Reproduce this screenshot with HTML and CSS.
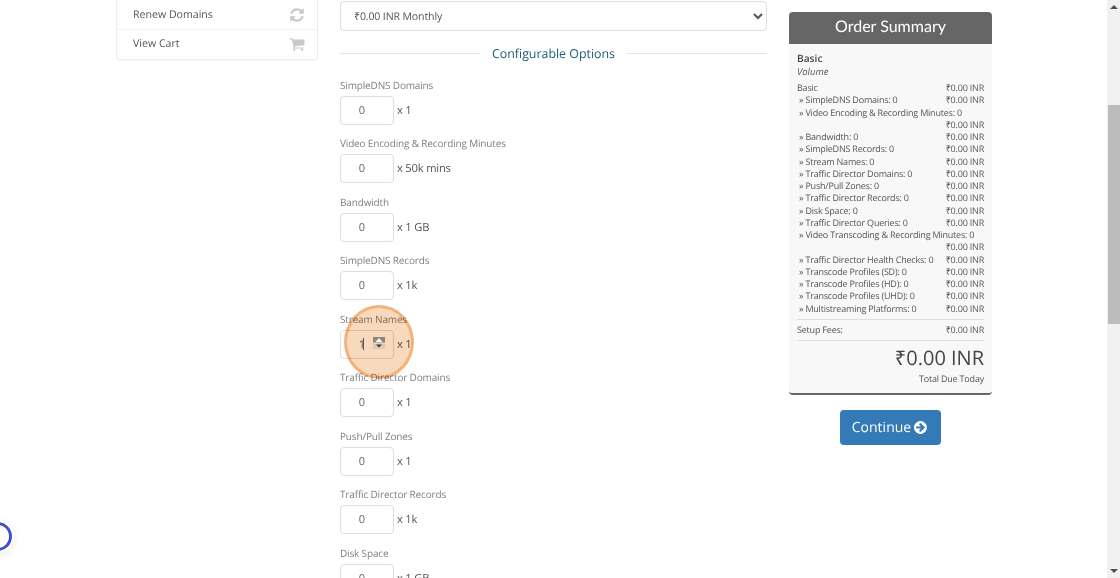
FILE: index.html
```html
<!DOCTYPE html>
<html lang="en">
<head>
    <meta charset="UTF-8">
    <title>Shopping Cart</title>
    <link rel="stylesheet" href="styles.css">
</head>
<body>
    <div class="page">
        <div class="sidebar">
            <a class="side-item">Renew Domains
                <svg class="side-icon" viewBox="0 0 1792 1792"><path d="M1639 1056q0 5-1 7-64 268-268 434.500t-478 166.500q-146 0-282.500-55t-243.500-157l-129 129q-19 19-45 19t-45-19-19-45v-448q0-26 19-45t45-19h448q26 0 45 19t19 45-19 45l-137 137q71 66 161 102t187 36q134 0 250-65t186-179q11-17 53-117 8-23 30-23h192q13 0 22.500 9.500t9.500 22.500zm25-800v448q0 26-19 45t-45 19h-448q-26 0-45-19t-19-45 19-45l138-138q-148-137-349-137-134 0-250 65t-186 179q-11 17-53 117-8 23-30 23h-199q-13 0-22.500-9.500t-9.500-22.500v-7q65-268 270-434.500t480-166.500q146 0 284 55.500t245 156.500l130-129q19-19 45-19t45 19 19 45z"/></svg>
            </a>
            <a class="side-item">View Cart
                <svg class="side-icon" viewBox="0 0 1792 1792"><path d="M704 1536q0 52-38 90t-90 38-90-38-38-90 38-90 90-38 90 38 38 90zm896 0q0 52-38 90t-90 38-90-38-38-90 38-90 90-38 90 38 38 90zm128-1088v512q0 24-16.500 42.500t-40.500 21.500l-1044 122q13 60 13 70 0 16-24 64h920q26 0 45 19t19 45-19 45-45 19h-1024q-26 0-45-19t-19-45q0-11 8-31.500t16-36 21.500-40 15.500-29.500l-177-823h-204q-26 0-45-19t-19-45 19-45 45-19h256q16 0 28.500 6.500t19.500 15.500 13 24.500 8 26 5.500 29.500 4.500 26h1201q26 0 45 19t19 45z"/></svg>
            </a>
        </div>

        <div class="options">
            <select class="cycle"><option>₹0.00 INR Monthly</option></select>
            <div class="sub-heading"><span>Configurable Options</span></div>

            <div class="option">
                <label>SimpleDNS Domains</label>
                <div class="qty"><input type="text" value="0"> x 1</div>
            </div>
            <div class="option">
                <label>Video Encoding &amp; Recording Minutes</label>
                <div class="qty"><input type="text" value="0"> x 50k mins</div>
            </div>
            <div class="option">
                <label>Bandwidth</label>
                <div class="qty"><input type="text" value="0"> x 1 GB</div>
            </div>
            <div class="option">
                <label>SimpleDNS Records</label>
                <div class="qty"><input type="text" value="0"> x 1k</div>
            </div>
            <div class="option">
                <label>Stream Names</label>
                <div class="qty"><input type="text" value="1"> x 1</div>
            </div>
            <div class="option">
                <label>Traffic Director Domains</label>
                <div class="qty"><input type="text" value="0"> x 1</div>
            </div>
            <div class="option">
                <label>Push/Pull Zones</label>
                <div class="qty"><input type="text" value="0"> x 1</div>
            </div>
            <div class="option">
                <label>Traffic Director Records</label>
                <div class="qty"><input type="text" value="0"> x 1k</div>
            </div>
            <div class="option">
                <label>Disk Space</label>
                <div class="qty"><input type="text" value="0"> x 1 GB</div>
            </div>
        </div>

        <div class="summary-col">
            <div class="summary">
                <h2>Order Summary</h2>
                <div class="summary-body">
                    <div class="product-name">Basic</div>
                    <div class="product-group">Volume</div>
                    <div class="line"><span>Basic</span><span>₹0.00 INR</span></div>
                    <div class="line sub"><span>» SimpleDNS Domains: 0</span><span>₹0.00 INR</span></div>
                    <div class="line sub"><span>» Video Encoding &amp; Recording Minutes: 0</span><span>₹0.00 INR</span></div>
                    <div class="line sub"><span>» Bandwidth: 0</span><span>₹0.00 INR</span></div>
                    <div class="line sub"><span>» SimpleDNS Records: 0</span><span>₹0.00 INR</span></div>
                    <div class="line sub"><span>» Stream Names: 0</span><span>₹0.00 INR</span></div>
                    <div class="line sub"><span>» Traffic Director Domains: 0</span><span>₹0.00 INR</span></div>
                    <div class="line sub"><span>» Push/Pull Zones: 0</span><span>₹0.00 INR</span></div>
                    <div class="line sub"><span>» Traffic Director Records: 0</span><span>₹0.00 INR</span></div>
                    <div class="line sub"><span>» Disk Space: 0</span><span>₹0.00 INR</span></div>
                    <div class="line sub"><span>» Traffic Director Queries: 0</span><span>₹0.00 INR</span></div>
                    <div class="line sub"><span>» Video Transcoding &amp; Recording Minutes: 0</span><span>₹0.00 INR</span></div>
                    <div class="line sub"><span>» Traffic Director Health Checks: 0</span><span>₹0.00 INR</span></div>
                    <div class="line sub"><span>» Transcode Profiles (SD): 0</span><span>₹0.00 INR</span></div>
                    <div class="line sub"><span>» Transcode Profiles (HD): 0</span><span>₹0.00 INR</span></div>
                    <div class="line sub"><span>» Transcode Profiles (UHD): 0</span><span>₹0.00 INR</span></div>
                    <div class="line sub"><span>» Multistreaming Platforms: 0</span><span>₹0.00 INR</span></div>
                    <div class="fees line"><span>Setup Fees:</span><span>₹0.00 INR</span></div>
                    <div class="total">₹0.00 INR</div>
                    <div class="total-label">Total Due Today</div>
                </div>
            </div>
            <a class="continue">Continue
                <svg viewBox="0 0 1792 1792"><path d="M1285 896q0-27-18-45l-91-91-362-362q-18-18-45-18t-45 18l-91 91q-18 18-18 45t18 45l189 189h-502q-26 0-45 19t-19 45v128q0 26 19 45t45 19h502l-189 189q-19 19-19 45t19 45l91 91q18 18 45 18t45-18l362-362 91-91q18-18 18-45zm251 0q0 209-103 385.500t-279.500 279.500-385.500 103-385.500-103-279.500-279.500-103-385.500 103-385.500 279.500-279.500 385.500-103 385.500 103 279.500 279.500 103 385.500z"/></svg>
            </a>
        </div>
    </div>

    <!-- click highlight over the Stream Names field -->
    <div class="click-mark">
        <span class="caret"></span>
        <svg class="spinner" viewBox="0 0 12 12"><rect width="12" height="5.500" fill="#8f857b"/><rect y="6.500" width="12" height="5.500" fill="#d9c9b8"/><path d="M6 1 9.500 5h-7z" fill="#fff"/><path d="M3 7.500h6L6 10.500z" fill="#3d3a38"/></svg>
    </div>

    <div class="help-ring"></div>

    <div class="scrollbar">
        <span class="arrow up"></span>
        <span class="thumb"></span>
        <span class="arrow down"></span>
    </div>
</body>
</html>
```

FILE: styles.css
```css
html, body {
    margin: 0;
    height: 578px;
    overflow: hidden;
    background: #fff;
}
body {
    font-family: "Open Sans", sans-serif;
    color: #555;
    position: relative;
    text-rendering: geometricPrecision;
}
.page {
    display: grid;
    grid-template-columns: 202px 427px 203px;
    column-gap: 22px;
    align-items: start;
    padding-left: 116px;
}

/* sidebar */
.sidebar {
    border: 1px solid #eee;
    border-top: 0;
    border-radius: 0 0 4px 4px;
    box-shadow: 0 1px 1px rgba(0, 0, 0, 0.04);
}
.side-item {
    display: flex;
    justify-content: space-between;
    align-items: center;
    height: 28px;
    padding: 1px 12px 0 16px;
    font-size: 10.600px;
    color: #555;
}
.side-item + .side-item {
    padding: 0 12px 1px 16px;
    border-top: 1px solid #f3f3f3;
}
.side-icon {
    width: 16px;
    height: 16px;
    fill: #c8c8c8;
}

/* options column */
.options {
    padding-top: 1px;
}
.cycle {
    display: block;
    width: 427px;
    height: 30px;
    padding: 1px 9px 0;
    font-family: inherit;
    font-size: 10.600px;
    letter-spacing: -0.150px;
    color: #555;
    background: #fff;
    border: 1px solid #ddd;
    border-radius: 4px;
    text-rendering: geometricPrecision;
}
.sub-heading {
    display: flex;
    align-items: center;
    gap: 12px;
    margin-top: 11px;
    height: 22px;
    font-size: 12.400px;
    color: #1f5c7a;
}
.sub-heading::before,
.sub-heading::after {
    content: "";
    flex: 1;
    border-top: 1px solid #e4e4e4;
}
.option {
    height: 58.440px;
}
.sub-heading + .option {
    margin-top: 12px;
}
.option label {
    display: block;
    height: 20px;
    line-height: 19px;
    font-size: 10px;
    letter-spacing: -0.160px;
    color: #808080;
}
.qty {
    display: flex;
    align-items: center;
    gap: 3px;
    font-size: 11.200px;
    letter-spacing: -0.200px;
    color: #555;
}
.qty input {
    box-sizing: border-box;
    width: 54px;
    height: 29px;
    padding: 0 10px 0 0;
    font-family: inherit;
    font-size: 11px;
    color: #666;
    text-align: center;
    border: 1px solid #ddd;
    border-radius: 4px;
    outline: none;
    text-rendering: geometricPrecision;
}

/* order summary */
.summary-col {
    padding-top: 12px;
}
.summary {
    background: #f8f8f8;
    border-bottom: 2px solid #666;
    border-radius: 4px;
    overflow: hidden;
}
.summary h2 {
    margin: 0;
    height: 32px;
    line-height: 30px;
    background: #666;
    color: #fff;
    font-family: Lato, sans-serif;
    font-size: 16px;
    font-weight: 400;
    text-align: center;
}
.summary-body {
    padding: 7px 8px 8px;
    font-size: 9px;
    letter-spacing: -0.200px;
    line-height: 12.250px;
    color: #555;
}
.product-name {
    font-size: 10.200px;
    letter-spacing: 0;
    line-height: 14px;
    font-weight: 600;
    color: #444;
}
.product-group {
    font-size: 9.500px;
    letter-spacing: 0;
    font-style: italic;
    margin-bottom: 4px;
    line-height: 13px;
}
.line {
    display: flex;
    flex-wrap: wrap;
    justify-content: space-between;
}
.line span:last-child {
    margin-left: auto;
}
.sub {
    padding-left: 2px;
}
.fees {
    margin-top: 4px;
    padding: 4px 0;
    border-top: 1px solid #ddd;
    border-bottom: 1px solid #ddd;
}
.total {
    margin-top: 3px;
    font-size: 20px;
    letter-spacing: 0;
    line-height: 27px;
    text-align: right;
    color: #444;
}
.total-label {
    margin-top: 2px;
    text-align: right;
}
.continue {
    display: flex;
    align-items: center;
    justify-content: center;
    gap: 3px;
    width: 101px;
    height: 35px;
    margin: 15px auto 0;
    background: #337ab7;
    border-radius: 4px;
    color: #fff;
    font-size: 14px;
}
.continue svg {
    width: 15px;
    height: 15px;
    fill: #fff;
}

/* overlays */
.click-mark {
    position: absolute;
    left: 344px;
    top: 305px;
    box-sizing: border-box;
    width: 70px;
    height: 74px;
    border-radius: 50%;
    border: 3px solid #f4b27a;
    background: #f9d9bc;
    mix-blend-mode: multiply;
}
.caret {
    position: absolute;
    left: 16px;
    top: 30px;
    width: 1px;
    height: 12px;
    background: #555;
}
.spinner {
    position: absolute;
    left: 26px;
    top: 29px;
    width: 12px;
    height: 12px;
}
.help-ring {
    position: absolute;
    left: -17px;
    top: 522px;
    box-sizing: border-box;
    width: 29px;
    height: 29px;
    border: 3px solid #3f51c8;
    border-radius: 50%;
    background: #fff;
    box-shadow: 0 0 0 2px #fff, 0 2px 8px rgba(0, 0, 0, 0.15);
}
.scrollbar {
    position: absolute;
    top: 0;
    right: 0;
    bottom: 0;
    width: 13px;
    background: #f1f1f1;
}
.thumb {
    position: absolute;
    left: 1px;
    right: 0;
    top: 105px;
    height: 219px;
    background: #bcbcbc;
}
.arrow {
    position: absolute;
    left: 3px;
    width: 0;
    height: 0;
    border-left: 4px solid transparent;
    border-right: 4px solid transparent;
}
.arrow.up {
    top: 5px;
    border-bottom: 4px solid #505050;
}
.arrow.down {
    bottom: 5px;
    border-top: 4px solid #505050;
}
```
